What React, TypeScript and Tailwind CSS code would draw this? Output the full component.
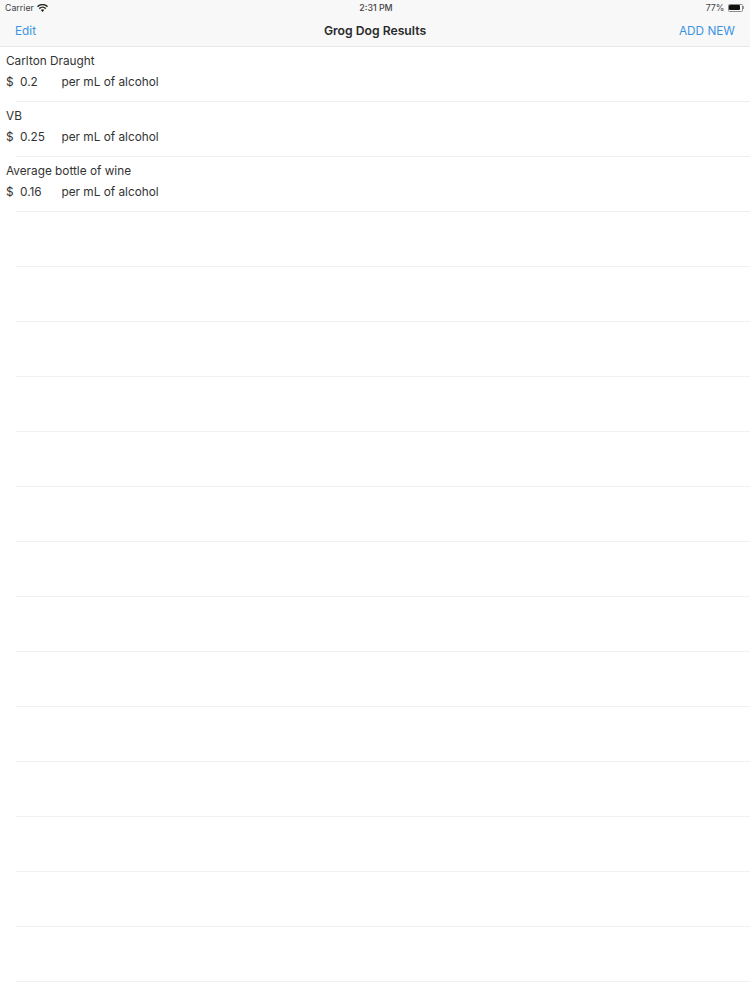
const results = [
  { name: "Carlton Draught", price: "0.2" },
  { name: "VB", price: "0.25" },
  { name: "Average bottle of wine", price: "0.16" },
]

// Empty table rows below the results
const emptyRows = Array.from({ length: 14 }, (_, i) => i)

function WifiIcon() {
  return (
    <svg width="11" height="8" viewBox="0 0 22 16" className="ml-[3px]" fill="#2a2a2a">
      <path d="M11 16 7.4 12.2a5 5 0 0 1 7.2 0Z" />
      <path d="M5.6 10.3 3.5 8a10.6 10.6 0 0 1 15 0l-2.1 2.3a7.6 7.6 0 0 0-10.8 0Z" />
      <path d="M1.9 6.3 0 4.2a15.6 15.6 0 0 1 22 0l-1.9 2.1a12.8 12.8 0 0 0-18.2 0Z" />
    </svg>
  )
}

function BatteryIcon() {
  return (
    <div className="ml-[3px] flex items-center">
      <div className="flex h-[8px] w-[15px] items-center rounded-[1.5px] border border-[#8a8a8a] p-[0.5px]">
        <div className="h-full w-[11px] rounded-[1px] bg-[#111]" />
      </div>
      <div className="ml-[0.5px] h-[3px] w-[1px] bg-[#9a9a9a]" />
    </div>
  )
}

export default function App() {
  return (
    <div className="h-[1000px] w-[750px] overflow-hidden bg-white font-['Inter','Liberation_Sans',sans-serif] text-[#333]">
      {/* Header */}
      <header className="h-[47px] border-b border-[#e8e8ea] bg-[#f8f8f9]">
        <div className="grid h-[15px] grid-cols-3 items-center px-[5px] text-[8.8px] text-[#444]">
          <div className="flex items-center">
            Carrier
            <WifiIcon />
          </div>
          <div className="pl-[2px] text-center font-medium">2:31 PM</div>
          <div className="flex items-center justify-end pr-[1px]">
            77%
            <BatteryIcon />
          </div>
        </div>
        <div className="grid h-[31px] grid-cols-3 items-center px-[15px] text-[11.8px]">
          <span className="pt-[2px] text-[#3a94e2]">Edit</span>
          <span className="pt-[1px] text-center text-[12.2px] font-semibold text-[#2a2a2a]">Grog Dog Results</span>
          <span className="pt-[2px] text-right text-[#3a94e2]">ADD NEW</span>
        </div>
      </header>

      {/* Results */}
      {results.map((r) => (
        <div key={r.name} className="relative h-[55px] pl-[6px] pt-[6px] text-[11.8px] leading-[16px]">
          <div>{r.name}</div>
          <div className="mt-[5px] flex">
            <span className="w-[14px]">$</span>
            <span className="w-[41.5px]">{r.price}</span>
            <span>per mL of alcohol</span>
          </div>
          <div className="absolute bottom-0 left-[16px] right-0 h-px bg-[#efefef]" />
        </div>
      ))}

      {/* Empty rows */}
      {emptyRows.map((i) => (
        <div key={i} className="ml-[16px] h-[55px] border-b border-[#f0f0f0]" />
      ))}
    </div>
  )
}
